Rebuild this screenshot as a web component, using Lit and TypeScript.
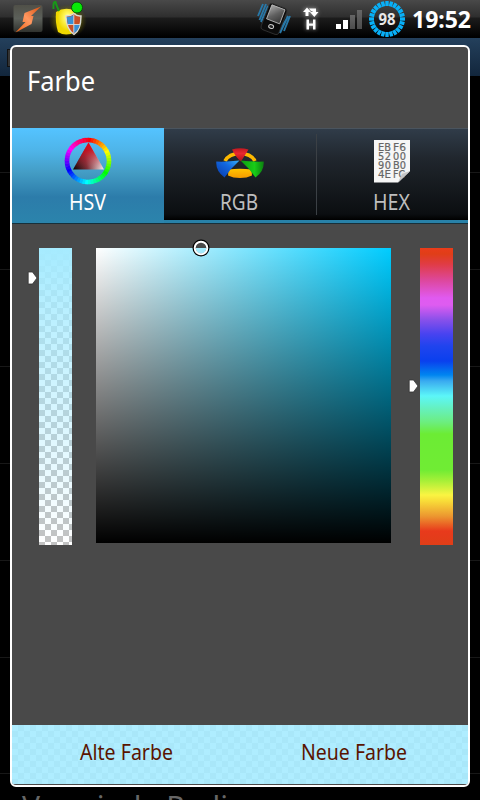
import { LitElement, html, svg, css } from "lit";
import { customElement, property } from "lit/decorators.js";

/** A single line of text fitted to a fixed width; `base` is the baseline offset. */
@customElement("fit-text")
class FitText extends LitElement {
  @property() text = "";
  @property({ type: Number }) width = 10;
  @property({ type: Number }) base = 20;
  static styles = css`
    :host { display: block; }
    svg { display: block; overflow: visible; }
    text { fill: currentColor; font-family: inherit; }
  `;
  render() {
    return html`<svg width=${this.width} height=${this.base}>
      <text x="0" y=${this.base} textLength=${this.width} lengthAdjust="spacingAndGlyphs">${this.text}</text>
    </svg>`;
  }
}

const HUES = Array.from({ length: 48 }, (_, i) => i * 7.5);
const TICKS = Array.from({ length: 24 }, (_, i) => i * 15);

function ringSegment(deg: number) {
  const a = (deg * Math.PI) / 180;
  const b = ((deg + 8.5) * Math.PI) / 180;
  const p = (t: number) => `${24 + 21 * Math.sin(t)} ${24 - 21 * Math.cos(t)}`;
  return svg`<path d="M${p(a)} A21 21 0 0 1 ${p(b)}" fill="none" stroke-width="4.6" stroke="hsl(${deg} 100% 50%)"/>`;
}

const hsvIcon = html`<svg width="48" height="48" viewBox="0 0 48 48">
  <defs>
    <linearGradient id="tr" x1="0" y1="1" x2="1" y2=".8"><stop offset="0" stop-color="#000"/><stop offset=".45" stop-color="#7a3038"/><stop offset="1" stop-color="#fff"/></linearGradient>
    <linearGradient id="tt" x1="0" y1="0" x2="0" y2="1"><stop offset="0" stop-color="#f00010"/><stop offset=".3" stop-color="#c80818" stop-opacity=".85"/><stop offset="1" stop-color="#b03040" stop-opacity="0"/></linearGradient>
  </defs>
  ${HUES.map(ringSegment)}
  <path d="M24.500 5.500 40 32.500H9Z" fill="url(#tr)"/><path d="M24.500 5.500 40 32.500H9Z" fill="url(#tt)"/>
</svg>`;

const rgbIcon = html`<svg width="48" height="48" viewBox="0 0 48 48">
  <defs>
    <linearGradient id="bl" x1="1" y1="0" x2="0" y2="1"><stop offset="0" stop-color="#38b0f8"/><stop offset=".4" stop-color="#1268e0"/><stop offset="1" stop-color="#0838a8"/></linearGradient>
    <linearGradient id="gr"><stop offset="0" stop-color="#0c9c10"/><stop offset=".6" stop-color="#18cc18"/><stop offset="1" stop-color="#0c8010"/></linearGradient>
    <linearGradient id="ye" x2="0" y2="1"><stop offset="0" stop-color="#ffc400"/><stop offset="1" stop-color="#f59a00"/></linearGradient>
    <linearGradient id="rd" x2="0" y2="1"><stop offset="0" stop-color="#c01820"/><stop offset=".4" stop-color="#e82830"/><stop offset="1" stop-color="#a81018"/></linearGradient>
  </defs>
  <path d="M9 24Q13 16.500 24 16.500T39 24" fill="none" stroke="#fdb800" stroke-width="3.600"/>
  <path d="M12.500 32.500Q24 31 35.500 32.500L36 38.500Q31 41 24 41 17 41 12 38.500Z" fill="url(#ye)"/>
  <path d="M16 12.500Q24 10 32.500 12.500Q29 18 25 24.500Q21 22 16 12.500Z" fill="url(#rd)"/>
  <path d="M.3 24.500Q10 25 23.500 23.500Q15 31 8.500 40.500Q-.5 34 .3 24.500Z" fill="url(#bl)"/>
  <path d="M47.700 24.500Q38 25 24.500 23.500Q33 31 39.500 40.500Q48.500 34 47.700 24.500Z" fill="url(#gr)"/>
</svg>`;

const hexIcon = html`<svg width="48" height="48" viewBox="0 0 48 48" font-family="DejaVu Sans" font-size="9.8" fill="#666" stroke="#666" stroke-width=".2">
  <path d="M6 3H42V34L30 45.500H6Z" fill="#f6f6f6" stroke="none"/>
  <text x="10" y="13.500" textLength="13" lengthAdjust="spacingAndGlyphs">EB</text><text x="25" y="13.500" textLength="13" lengthAdjust="spacingAndGlyphs">F6</text>
  <text x="10" y="22.500" textLength="13">52</text><text x="25" y="22.500" textLength="13">00</text>
  <text x="10" y="31.500" textLength="13">90</text><text x="25" y="31.500" textLength="13" lengthAdjust="spacingAndGlyphs">B0</text>
  <text x="10" y="40.500" textLength="13" lengthAdjust="spacingAndGlyphs">4E</text><text x="25" y="40.500" textLength="12" lengthAdjust="spacingAndGlyphs">FC</text>
  <path d="M42 34Q38 36 33 35 34 40 30 45.500Z" fill="#e2e2e2" stroke="none"/><path d="M42 34 30 45.500 34 37Z" fill="#c4c4c4" stroke="none"/>
</svg>`;

const boltIcon = html`<svg class="bolt" width="30" height="30" viewBox="0 0 30 30">
  <defs><linearGradient id="bx" x2="0" y2="1"><stop offset="0" stop-color="#505048"/><stop offset=".5" stop-color="#5c605a"/><stop offset="1" stop-color="#30322e"/></linearGradient>
  <linearGradient id="bo" x1="1" y1="0" x2="0" y2="1"><stop offset="0" stop-color="#d85010"/><stop offset=".5" stop-color="#ff9860"/><stop offset="1" stop-color="#f06010"/></linearGradient></defs>
  <rect x=".5" y="1" width="29" height="27" rx="2" fill="url(#bx)"/>
  <path d="M28 2.500 11.500 9 9.500 18 12.500 18 2.500 28.500 18.500 20 20.500 12 18 12Z" fill="url(#bo)"/>
</svg>`;

const shieldIcon = html`<svg class="shield" width="38" height="38" viewBox="0 0 38 38">
  <defs><radialGradient id="gl"><stop offset=".5" stop-color="#a09800"/><stop offset="1" stop-color="#605800" stop-opacity="0"/></radialGradient>
  <radialGradient id="yl" cx=".6" cy=".35"><stop offset="0" stop-color="#fff"/><stop offset=".35" stop-color="#fff860"/><stop offset="1" stop-color="#f0d800"/></radialGradient></defs>
  <ellipse cx="19" cy="21" rx="19" ry="17" fill="url(#gl)" opacity=".65"/>
  <path d="M7 12Q16 6 27 11L26 32Q17 37 9 32Q6 22 7 12Z" fill="url(#yl)"/>
  <path d="M4.500 9Q4 1 6.500 2 8 7 10 11" fill="none" stroke="#189818" stroke-width="2"/>
  <path d="M17 16Q22 16 25 13.500 28 16.500 32 16 32 30 25 34.500 17 29 17 16Z" fill="#c85028" stroke="#d8dcd8" stroke-width="1.400"/>
  <path d="M17.800 17Q22 17 24.800 15V24.500H18.800ZM24.800 24.500H30.800Q29.500 30.500 24.800 33.300Z" fill="#3890d8"/>
  <path d="M24.800 15V33M18.500 24.500H31" stroke="#ddd" stroke-width=".9"/>
  <circle cx="28" cy="7.500" r="5.500" fill="#08e808" stroke="#0a4c0a"/>
</svg>`;

const phoneIcon = html`<svg class="phone" width="34" height="34" viewBox="0 0 34 34">
  <defs><linearGradient id="sc" x2="1" y2="1"><stop offset="0" stop-color="#aaa"/><stop offset=".5" stop-color="#606060"/><stop offset="1" stop-color="#333"/></linearGradient></defs>
  <path d="M6 2 1 14M9 2 2.500 18M11 4 4 20M33 14 27 29M31 14 23 31M29 18 21 31" stroke="#2878a8" stroke-width="1.900"/>
  <g transform="rotate(21 17 17)"><rect x="7.500" y="3" width="19" height="28" rx="3" fill="#0c0c0c" stroke="#333" stroke-width=".8"/>
  <rect x="10" y="4.500" width="14" height="15" fill="url(#sc)" stroke="#bbb" stroke-width=".8"/>
  <ellipse cx="17" cy="25" rx="2.500" ry="1.900" fill="#222" stroke="#ccc"/></g>
</svg>`;

const dataIcon = html`<svg class="data" width="24" height="30" viewBox="0 0 24 30">
  <g fill="#fff"><path d="M4 7 8 2.500 12 7H9.500V11H6.500V7ZM10 3.500H17V7H19.500L15.300 12 11 7H13.500V6H12Z"/>
  <path d="M7.500 14.500H10V18.500H14V14.500H16.500V24.500H14V20.700H10V24.500H7.500Z"/></g>
</svg>`;

const thumb = html`<svg class="thumb" width="11" height="14" viewBox="0 0 11 14"><path d="M1.200 1H5.500L10 7 5.500 13H1.200Z" fill="#fff" stroke="#333" stroke-width=".8"/></svg>`;

@customElement("app-root")
class AppRoot extends LitElement {
  static styles = css`
    :host { display: block; position: relative; width: 480px; height: 800px; overflow: hidden; background: #000; font-family: "Noto Sans", "Open Sans", sans-serif; color: #fff; }
    svg { display: block; flex: none; }
    .status { display: flex; height: 38px; background: linear-gradient(#494949, #2e2e2e 17px, #1c1c1c 18px, #000 37px); }
    .bolt { margin: 4px 0 0 13px; }
    .shield { margin: 0 0 0 6px; }
    .phone { margin: 2px 0 0 170px; }
    .data { margin: 5px 0 0 8px; filter: drop-shadow(0 0 2px #aaa); }
    .bars { display: flex; align-items: flex-end; gap: 2px; height: 29px; margin-left: 13px; }
    .bars i { width: 5px; background: linear-gradient(#666, #4c4c4c); }
    .bars .on { background: #fff; }
    .b1 { height: 5px; } .b2 { height: 9px; } .b3 { height: 14px; } .b4 { height: 19px; }
    .battery { margin: 1px 0 0 7px; }
    .battery text { font: bold 15.5px "Noto Sans"; fill: #e8e8e8; }
    .clock { margin: 0 0 0 7px; font-size: 23.5px; font-weight: bold; }
    .title { height: 38px; padding-left: 7px; background: linear-gradient(#24405c, #12263c); }
    .title i { display: block; width: 5px; height: 16px; position: relative; top: 11px; background: #333; border: 1px solid #111; }
    .row { height: 96px; border-bottom: 1px solid #181818; }
    .behind { position: absolute; left: 22px; top: 795px; color: #666; font-size: 29px; }
    .last { height: 115px; }
    .dialog { position: absolute; left: 10px; top: 45px; width: 456px; height: 738px; border: 2px solid #fff; border-radius: 6px; background: #494949; display: flex; flex-direction: column; overflow: hidden; }
    .head { height: 81px; flex: none; padding-left: 15px; font-size: 28px; box-sizing: border-box; }
    .tabs { display: flex; height: 95px; flex: none; border-bottom: 1px solid #17303a; background: #2881a8; }
    .tab { width: 152px; height: 92px; display: flex; flex-direction: column; align-items: center; position: relative; color: #bebebe; font-size: 22px; padding-top: 8px; box-sizing: border-box; background: linear-gradient(#303c49, #20262d 30px, #14181c 62px, #0b0e11 85px, #000); border-top: 1px solid #4a545e; }
    .tab.active { height: 95px; color: #fff; background: linear-gradient(#54c3ff, #4eb4e8 22px, #439cc4 44px, #2c7caa 68px, #2b84ac); border-top-color: #54c3ff; }
    .tab.sep { z-index: 1; }
    .tab.sep::after { content: ""; position: absolute; right: -1px; top: 5px; width: 1px; height: 81px; background: #3b4045; }
    .cap { margin: 9px 2px 0 0; }
    .picker { display: flex; flex: none; height: 297px; margin-top: 24px; padding-left: 16px; }
    .thumb { margin: 23px 0 0 -1px; }
    .alpha { width: 33px; height: 297px; margin-left: 1px; background: linear-gradient(#a6ebff, rgba(166,235,255,0)), repeating-conic-gradient(#c2c2c2 0 25%, #fff 0 50%) 0 0 / 12px 12px; }
    .sv { width: 295px; height: 295px; margin-left: 24px; position: relative; background: linear-gradient(transparent, #000), linear-gradient(90deg, #fff, #00ccff); }
    .knob { position: absolute; left: 94.5px; top: -10.5px; }
    .huethumb { margin: 108px 0 0 18px; }
    .hue { width: 33px; height: 297px; margin-left: 1px; background: linear-gradient(#ea3c1a, #e03e18 6px, #e03c44 16px, #dd48a0 33px, #e05af0 50px, #de5cf0 57px, #8850ea 72px, #4843f0 86px, #2044ee 98px, #0a40ee 113px, #0085f0 127px, #3aaaf0 133px, #5cf6f8 148px, #66f0b8 162px, #6cee80 174px, #6cec34 186px, #70ec34 222px, #a8f038 233px, #faf442 247px, #f8dc38 253px, #ec9830 268px, #e83a1c 283px, #e03e18); }
    .foot { display: flex; flex: none; height: 59px; margin-top: 180px; font-size: 22px; color: #5a1400; background: linear-gradient(rgba(166,235,255,.9), rgba(166,235,255,.9)), repeating-conic-gradient(#c2c2c2 0 25%, #fff 0 50%) 0 0 / 12px 12px; }
    .old { margin-left: 68px; } .new { margin-left: 128px; }
  `;
  render() {
    return html`
      <div class="status">
        ${boltIcon}${shieldIcon}${phoneIcon}${dataIcon}
        <div class="bars"><i class="on b1"></i><i class="on b2"></i><i class="b3"></i><i class="b4"></i></div>
        <svg class="battery" width="36" height="36" viewBox="0 0 36 36">
          ${TICKS.map((d) => svg`<rect x="16.300" y="0" width="3.400" height="5" fill="#08b0f8" transform="rotate(${d} 18 18)"/>`)}
          <text x="9.500" y="24" textLength="17" lengthAdjust="spacingAndGlyphs">98</text>
        </svg>
        <fit-text class="clock" text="19:52" .width=${59} .base=${28}></fit-text>
      </div>
      <div class="title"><i></i></div>
      <div class="row"></div><div class="row"></div><div class="row"></div><div class="row"></div><div class="row"></div><div class="row"></div><div class="row last"></div>
      <fit-text class="behind" text="Verminde Radius" .width=${239} .base=${22}></fit-text>
      <div class="dialog">
        <div class="head"><fit-text text="Farbe" .width=${68} .base=${44}></fit-text></div>
        <div class="tabs">
          <div class="tab active">${hsvIcon}<fit-text class="cap" text="HSV" .width=${37} .base=${16}></fit-text></div>
          <div class="tab sep">${rgbIcon}<fit-text class="cap" text="RGB" .width=${38} .base=${16}></fit-text></div>
          <div class="tab">${hexIcon}<fit-text class="cap" text="HEX" .width=${37} .base=${16}></fit-text></div>
        </div>
        <div class="picker">
          ${thumb}
          <div class="alpha"></div>
          <div class="sv"><svg class="knob" width="20" height="20" viewBox="0 0 20 20"><circle cx="10" cy="10" r="7" fill="none" stroke="#000" stroke-width="3"/><circle cx="10" cy="10" r="6.300" fill="none" stroke="#fff" stroke-width="2"/></svg></div>
          <div class="huethumb"><svg class="thumb" style="margin-top:23px" width="11" height="14" viewBox="0 0 11 14"><path d="M1.200 1H5.500L10 7 5.500 13H1.200Z" fill="#fff" stroke="#333" stroke-width=".8"/></svg></div>
          <div class="hue"></div>
        </div>
        <div class="foot">
          <fit-text class="old" text="Alte Farbe" .width=${93} .base=${35}></fit-text>
          <fit-text class="new" text="Neue Farbe" .width=${106} .base=${35}></fit-text>
        </div>
      </div>
    `;
  }
}
